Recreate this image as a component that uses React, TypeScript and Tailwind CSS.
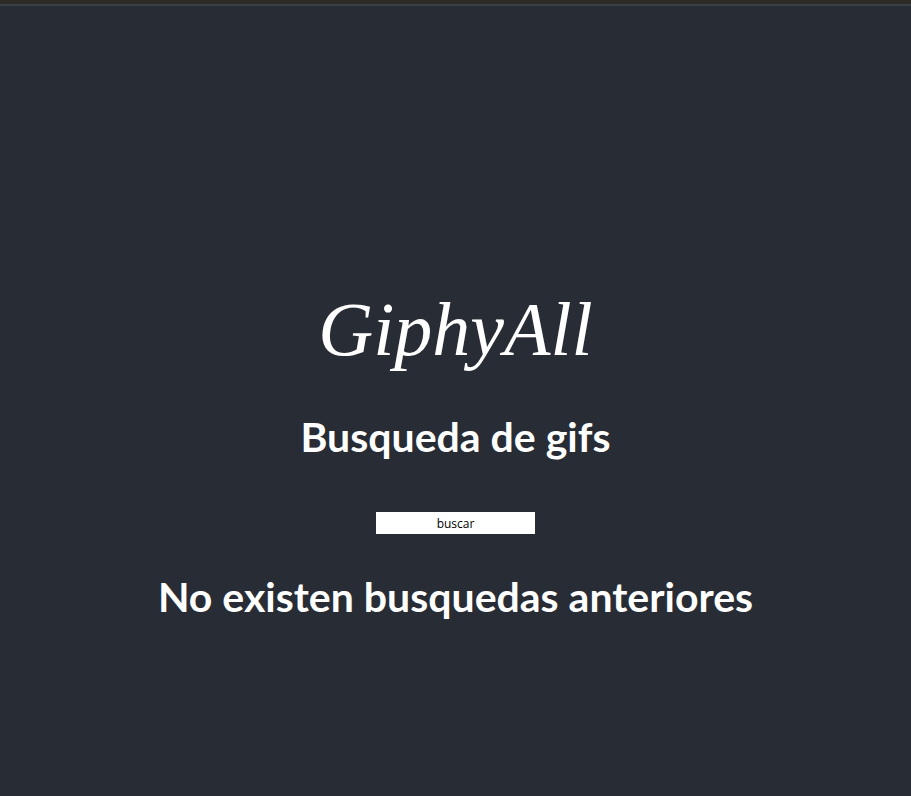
export default function App() {
  return (
    <div className="min-h-screen flex flex-col bg-[#282c34] text-white">
      <div className="h-[4px] bg-[#2d2b27]"></div>
      <div className="h-[2px] bg-[#3a3f47]"></div>

      <main className="flex flex-col items-center pt-[285px]">
        <h1 className="font-['Liberation_Serif',serif] italic text-[76px] leading-none">
          GiphyAll
        </h1>

        <h2 className="mt-[49px] font-['Lato',sans-serif] font-bold text-[41px] leading-none">
          Busqueda de gifs
        </h2>

        <input
          type="text"
          placeholder="buscar"
          className="mt-[55px] w-[159px] h-[22px] bg-white text-center text-[12px] text-black placeholder:text-black font-['Open_Sans',sans-serif] outline-none"
        />

        <h2 className="mt-[42px] font-['Lato',sans-serif] font-bold text-[41px] leading-none">
          No existen busquedas anteriores
        </h2>
      </main>
    </div>
  );
}
